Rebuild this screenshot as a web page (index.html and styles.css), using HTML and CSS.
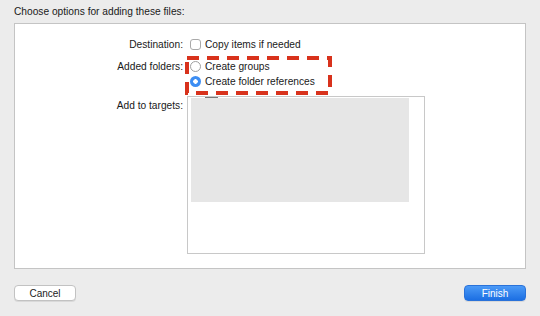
FILE: index.html
```html
<!DOCTYPE html>
<html lang="en">
<head>
  <meta charset="UTF-8" />
  <title>Add files</title>
  <link rel="stylesheet" href="styles.css">
</head>
<body>
  <p class="title">Choose options for adding these files:</p>

  <div class="panel">
    <div class="form">
      <div class="label">Destination:</div>
      <div class="control">
        <label class="option"><span class="checkbox"></span>Copy items if needed</label>
      </div>

      <div class="label">Added folders:</div>
      <div class="control">
        <label class="option"><span class="radio"></span>Create groups</label>
        <label class="option"><span class="radio checked"></span>Create folder references</label>
      </div>

      <div class="label targets-label">Add to targets:</div>
      <div class="targets">
        <span class="peek"></span>
        <div class="targets-cover"></div>
      </div>
    </div>

    <!-- annotation drawn over the form -->
    <svg class="highlight" width="170" height="50" viewBox="0 0 170 50">
      <rect x="3" y="2" width="143" height="35" fill="none" stroke="#d8321c" stroke-width="4" stroke-dasharray="12 8"/>
    </svg>
  </div>

  <div class="buttons">
    <button class="btn">Cancel</button>
    <button class="btn primary">Finish</button>
  </div>
</body>
</html>
```

FILE: styles.css
```css
* {
  margin: 0;
  padding: 0;
  box-sizing: border-box;
}

body {
  background: #ececec;
  font-family: "Liberation Sans", Arial, sans-serif;
  font-size: 10.2px;
  color: #1a1a1a;
  padding: 6px 14px 0;
  height: 316px;
  overflow: hidden;
}

.title {
  line-height: 12px;
  height: 17px;
}

.panel {
  position: relative;
  background: #fff;
  border: 1px solid #c4c4c4;
  height: 246px;
  padding-top: 13px;
}

.form {
  display: grid;
  grid-template-columns: 168px 1fr;
  column-gap: 7px;
  row-gap: 7px;
}

.label {
  text-align: right;
  line-height: 15px;
}

.targets-label {
  padding-top: 2px;
}

.control {
  display: flex;
  flex-direction: column;
}

.option {
  display: flex;
  align-items: center;
  height: 15px;
  gap: 4px;
}

.checkbox {
  width: 11px;
  height: 11px;
  border: 1px solid #a9a9a9;
  border-radius: 3px;
  background: #fff;
}

.radio {
  width: 11px;
  height: 11px;
  border: 1px solid #a0a0a0;
  border-radius: 50%;
  background: #fff;
}

.radio.checked {
  border: none;
  background: radial-gradient(circle, #fff 0 2px, #3d8ef3 2.5px);
}

.targets {
  position: relative;
  width: 238px;
  height: 158px;
  margin-left: -3px;
  border: 1px solid #c8c8c8;
  background: #fff;
  padding: 1px 15px 0 3px;
}

.targets-cover {
  height: 104px;
  background: #e6e6e6;
}

.peek {
  position: absolute;
  top: 0;
  left: 17px;
  width: 13px;
  height: 1px;
  background: #777;
}

.highlight {
  position: absolute;
  left: 169px;
  top: 32px;
}

.buttons {
  display: flex;
  justify-content: space-between;
  margin-top: 16px;
}

.btn {
  width: 62px;
  height: 16px;
  font-family: inherit;
  font-size: 10px;
  color: #222;
  background: #fff;
  border: 1px solid #c2c2c2;
  border-radius: 4px;
  box-shadow: 0 1px 0 rgba(0,0,0,0.08);
}

.btn.primary {
  color: #fff;
  background: linear-gradient(#4b9af7, #1c6fe3);
  border-color: #2a72d9;
}
```
